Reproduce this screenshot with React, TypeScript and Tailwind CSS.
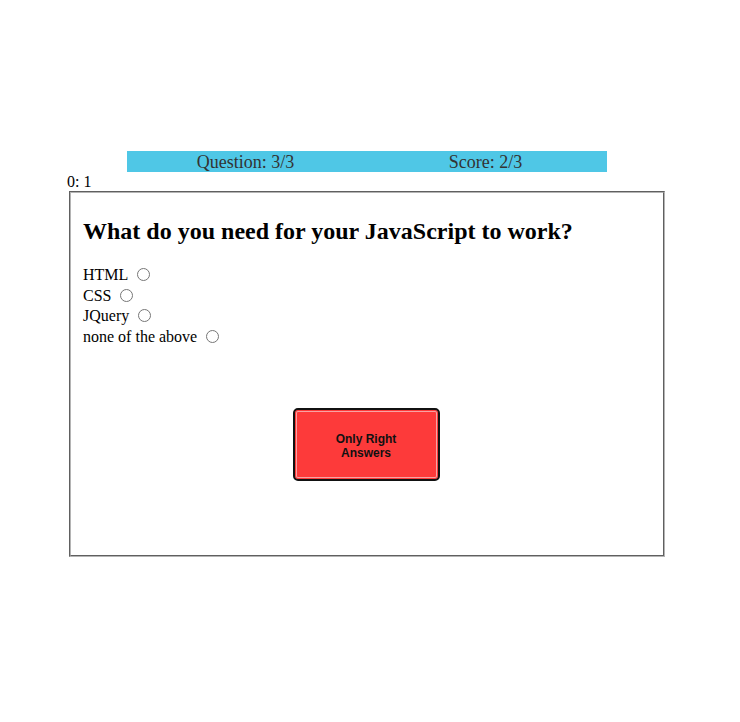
import { useState } from "react";

const options = ["HTML", "CSS", "JQuery", "none of the above"];

export default function App() {
  const [picked, setPicked] = useState<string | null>(null);

  return (
    <div className="min-h-[722px] w-full bg-white text-black font-['Liberation_Serif',serif]">
      <div className="pt-[151px]">
        {/* Status bar */}
        <div className="ml-[127px] flex h-[21px] w-[480px] bg-[#4fc7e6] pt-[1px] text-[18px] leading-[21px] text-[#333]">
          <div className="flex-1 pr-[3px] text-center">Question: 3/3</div>
          <div className="flex-1 pr-[3px] text-center">Score: 2/3</div>
        </div>

        <div className="ml-[67px] h-[19px] text-[16px] leading-[19px]">0: 1</div>

        {/* Question card */}
        <div className="ml-[69px] flex h-[366px] w-[596px] flex-col border-2 border-[#b4b4b4] [border-style:groove] px-3">
          <h2 className="mt-[24px] mb-[20px] text-[24px] font-bold leading-[28px]">
            What do you need for your JavaScript to work?
          </h2>

          <div className="text-[16px]">
            {options.map((opt) => (
              <div key={opt} className="flex h-[20.5px] items-center">
                <span>{opt}</span>
                <input
                  type="radio"
                  name="answer"
                  checked={picked === opt}
                  onChange={() => setPicked(opt)}
                  className="ml-[9px] mb-[1px] h-[13px] w-[13px]"
                />
              </div>
            ))}
          </div>

          <div className="mt-[61px] flex justify-center pr-[2px]">
            <button className="h-[73px] w-[147px] rounded-[5px] border-2 border-[#111] bg-[#fd3a3a] px-8 pt-[2px] font-['Liberation_Sans',sans-serif] text-[12px] font-bold leading-[14px] text-[#111] shadow-[inset_0_0_0_1px_#fd3a3a,inset_0_0_0_2px_#f7a3a3]">
              Only Right Answers
            </button>
          </div>
        </div>
      </div>
    </div>
  );
}
